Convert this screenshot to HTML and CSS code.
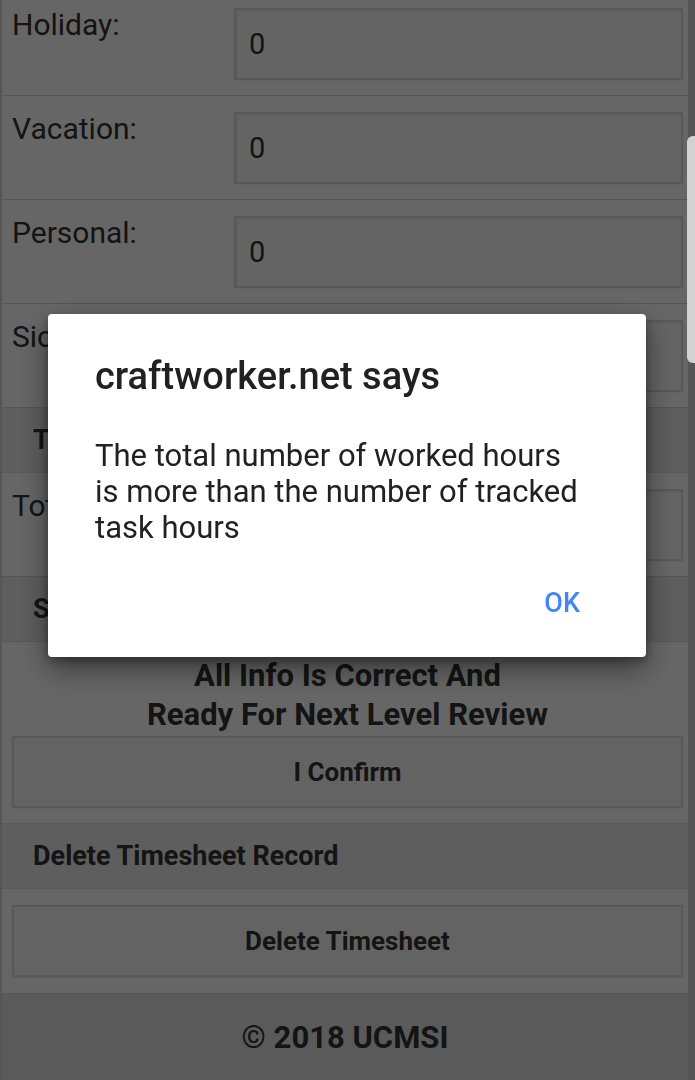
FILE: index.html
```html
<!DOCTYPE html>
<html lang="en">
<head>
<meta charset="utf-8">
<title>Timesheet</title>
<link rel="stylesheet" href="styles.css">
</head>
<body>
<div class="page">
  <div class="row">
    <div class="label">Holiday:</div>
    <div class="field">0</div>
  </div>
  <div class="row">
    <div class="label">Vacation:</div>
    <div class="field">0</div>
  </div>
  <div class="row">
    <div class="label">Personal:</div>
    <div class="field">0</div>
  </div>
  <div class="row">
    <div class="label">Sick:</div>
    <div class="field">0</div>
  </div>
  <div class="section-head">Total Hours</div>
  <div class="row">
    <div class="label">Total:</div>
    <div class="field">0</div>
  </div>
  <div class="section-head">Submit Timesheet</div>
  <div class="block">
    <p class="confirm-text">All Info Is Correct And<br>Ready For Next Level Review</p>
    <button class="btn">I Confirm</button>
  </div>
  <div class="section-head">Delete Timesheet Record</div>
  <div class="block block-plain">
    <button class="btn">Delete Timesheet</button>
  </div>
  <footer class="footer">© 2018 UCMSI</footer>
</div>
<div class="backdrop"></div>
<div class="scrollbar"></div>
<div class="dialog" role="alertdialog">
  <h1 class="dialog-title">craftworker.net says</h1>
  <p class="dialog-msg">The total number of worked hours<br>is more than the number of tracked<br>task hours</p>
  <div class="dialog-actions"><button class="dialog-ok">OK</button></div>
</div>
</body>
</html>
```
FILE: styles.css
```css
html, body {
  margin: 0;
  padding: 0;
  height: 100%;
  overflow: hidden;
}
body {
  background: #d4d4d4;
  font-family: Roboto, "Noto Sans", "Liberation Sans", sans-serif;
  color: #333;
}
.page {
  width: 686px;
  margin-top: -8px;
  border-left: 2px solid #d8d8d8;
  border-right: 2px solid #d8d8d8;
  background: #fff;
}
.row {
  display: grid;
  grid-template-columns: 222px 1fr;
  padding: 16px 5px 15px 10px;
  border-bottom: 1px solid #d6d6d6;
  background: #fff;
}
.label {
  font-size: 30px;
  line-height: 34px;
  color: #333;
}
.field {
  height: 68px;
  border: 2px solid #dcdcdc;
  box-shadow: inset 1px 1px 2px rgba(0,0,0,0.08), 0 1px 2px rgba(0,0,0,0.05);
  background: #fafafa;
  font-size: 29px;
  line-height: 68px;
  padding-left: 13px;
  color: #333;
}
.section-head {
  height: 64px;
  line-height: 64px;
  padding-left: 31px;
  background: #eaeaea;
  border-bottom: 1px solid #dedede;
  font-size: 27px;
  font-weight: 700;
  color: #333;
}
.block {
  padding: 14px 5px 15px 10px;
  background: #fff;
  border-bottom: 1px solid #dedede;
  display: flex;
  flex-direction: column;
}
.block-plain {
  padding-top: 16px;
  padding-bottom: 16px;
}
.confirm-text {
  margin: 0 0 2px;
  text-align: center;
  font-size: 31px;
  line-height: 39px;
  font-weight: 700;
  color: #333;
}
.btn {
  height: 72px;
  width: 100%;
  border: 2px solid #dcdcdc;
  background: #f8f8f8;
  box-shadow: 0 1px 3px rgba(0,0,0,0.08);
  font-family: Roboto, "Noto Sans", "Liberation Sans", sans-serif;
  font-size: 26px;
  font-weight: 700;
  color: #333;
  padding: 0;
}
.footer {
  background: #e2e2e2;
  text-align: center;
  font-size: 31px;
  font-weight: 700;
  padding: 25px 0 40px;
  color: #333;
}
.backdrop {
  position: fixed;
  inset: 0;
  background: rgba(0,0,0,0.6);
}
.scrollbar {
  position: fixed;
  right: 0;
  top: 136px;
  width: 8px;
  height: 227px;
  background: #d2d2d2;
  border-radius: 6px 0 0 6px;
}
.dialog {
  position: fixed;
  left: 48px;
  top: 314px;
  width: 598px;
  height: 343px;
  box-sizing: border-box;
  background: #fff;
  border-radius: 4px;
  box-shadow: 0 12px 30px rgba(0,0,0,0.45), 0 4px 10px rgba(0,0,0,0.3);
  padding: 40px 66px 0 47px;
  display: flex;
  flex-direction: column;
}
.dialog-title {
  margin: 0;
  font-size: 38px;
  font-weight: 500;
  line-height: normal;
  color: #212121;
}
.dialog-msg {
  margin: 40px 0 0;
  font-size: 31px;
  line-height: 36px;
  color: #212121;
}
.dialog-actions {
  margin-top: 41px;
  display: flex;
  justify-content: flex-end;
}
.dialog-ok {
  border: 0;
  background: none;
  padding: 0;
  font-family: Roboto, "Noto Sans", "Liberation Sans", sans-serif;
  font-size: 27px;
  font-weight: 500;
  color: #4285f4;
  line-height: normal;
}
```
